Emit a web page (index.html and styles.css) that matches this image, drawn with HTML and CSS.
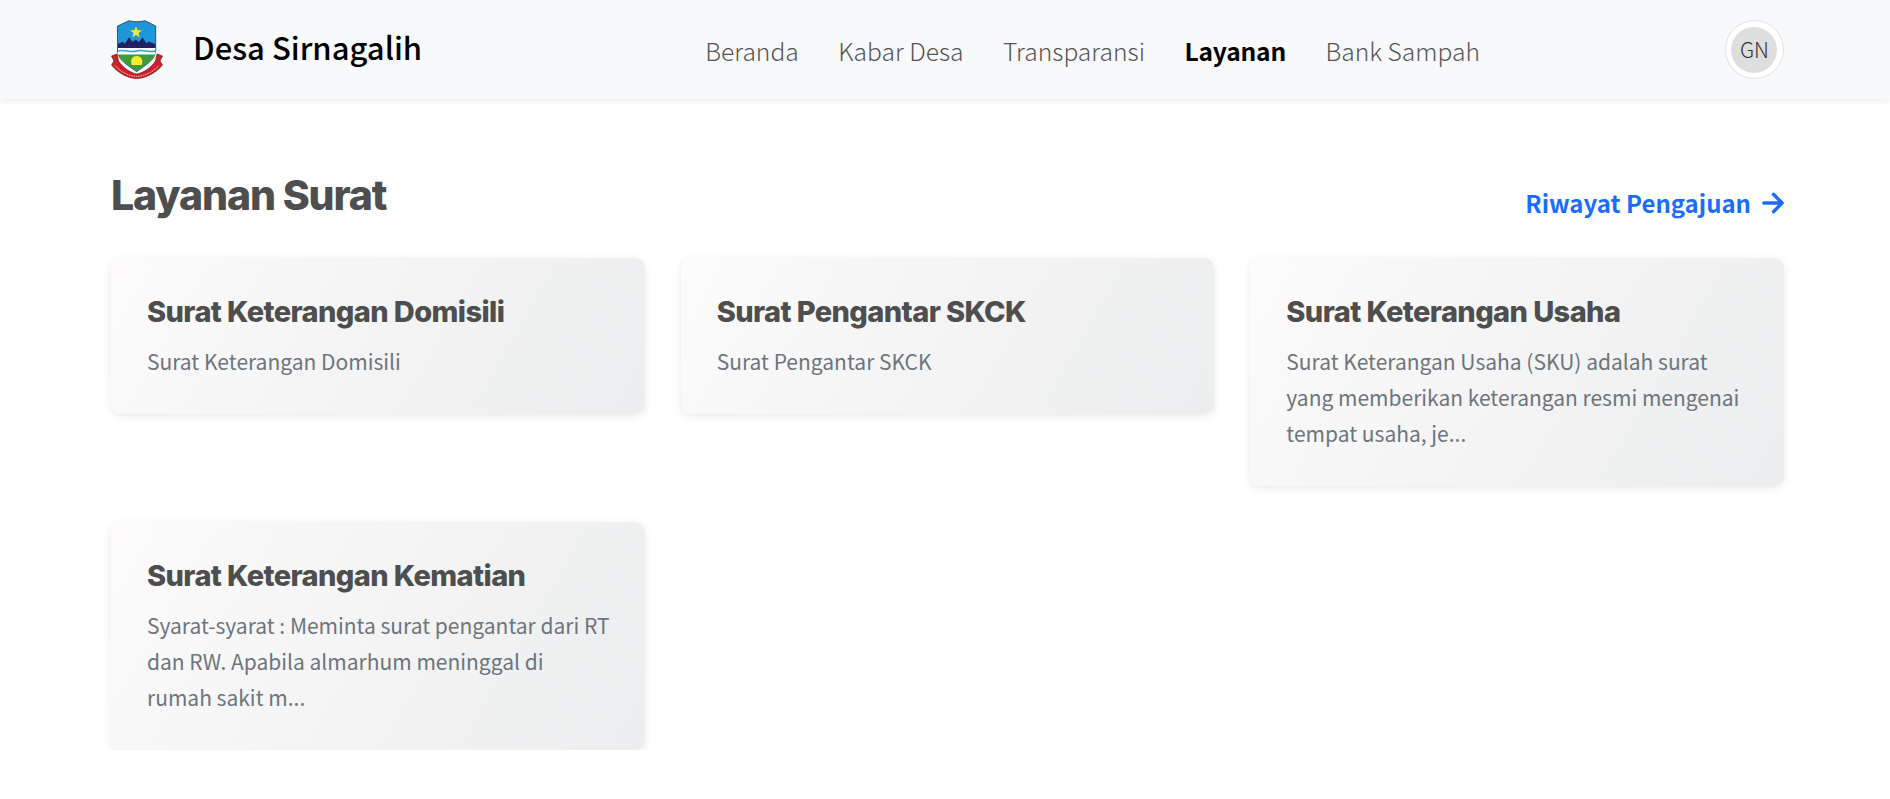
FILE: index.html
```html
<!DOCTYPE html>
<html lang="id">
<head>
  <meta charset="UTF-8">
  <meta name="viewport" content="width=device-width, initial-scale=1.0">
  <title>Desa Sirnagalih</title>
  <link rel="stylesheet" href="styles.css">
</head>
<body>
  <header class="navbar">
    <a class="brand" href="#">
      <svg class="brand-logo" viewBox="0 0 52 59" aria-hidden="true">
        <!-- pita -->
        <path d="M0.5 36 L6 34 L7.5 41 C12 48 20 53 25.7 54 C32 53 40 48 44.5 41 L46 34 L51.5 36 L49 41 L51.5 45 C44 54 33 58.5 25.7 58.5 C18 58.5 8 54 0.5 45 L3 41 Z" fill="#cf2027" stroke="#4a1013" stroke-width="0.6"/>
        <path d="M4 45.5 C10 52 18 56.4 25.7 56.4 C33 56.4 42 52 48 45.5" fill="none" stroke="#f3d9d9" stroke-width="0.9" stroke-dasharray="1.6 0.8"/>
        <!-- perisai -->
        <path d="M6.5 6 L18 0.7 C23 2 29 2 34 0.7 L44.7 6 L44.7 30 C44.7 40 33 46 25.7 51.7 C18 46 6.5 40 6.5 30 Z" fill="#1e96d8" stroke="#20242a" stroke-width="0.7"/>
        <path d="M7 28.5 L7 24 L11.3 21.7 L14 23.5 L18 17.3 L21.5 22 L24.7 19.5 L28 22 L31.7 17.3 L35 23 L38.3 21.7 L44.3 24 L44.3 28.5 Z" fill="#231f63"/>
        <path d="M7 28 H44.3 V35 H7 Z" fill="#fff"/>
        <path d="M7 31 C13 29 19 33 25.7 31 C32 29 38 33 44.3 31" fill="none" stroke="#2aa3dc" stroke-width="1.5"/>
        <path d="M7 34.5 H44.3 C44 40 33 45.5 25.7 51.2 C18 45.5 7.2 40 7 34.5 Z" fill="#3f9a3a"/>
        <path d="M20.7 45 C19 40 21 36 25.7 36 C30.4 36 32.4 40 30.7 45 Z" fill="#f7ec2f"/>
        <path d="M25 6 L26.5 10.3 L31 10.3 L27.4 13 L28.7 17.4 L25 14.8 L21.3 17.4 L22.6 13 L19 10.3 L23.5 10.3 Z" fill="#f7e93a"/>
      </svg>
      <span class="brand-name">Desa Sirnagalih</span>
    </a>
    <nav class="nav-links">
      <a href="#">Beranda</a>
      <a href="#">Kabar Desa</a>
      <a href="#">Transparansi</a>
      <a href="#" class="active">Layanan</a>
      <a href="#">Bank Sampah</a>
    </nav>
    <div class="avatar"><span>GN</span></div>
  </header>

  <main class="content">
    <div class="page-head">
      <h1>Layanan Surat</h1>
      <a class="history-link" href="#">Riwayat Pengajuan
        <svg viewBox="0 0 24 24" aria-hidden="true"><path d="M2 12 H22 M12.5 2.5 L22 12 L12.5 21.5" fill="none" stroke="currentColor" stroke-width="3.6" stroke-linecap="round" stroke-linejoin="round"/></svg>
      </a>
    </div>

    <section class="card-grid">
      <a class="card" href="#">
        <h2>Surat Keterangan Domisili</h2>
        <p>Surat Keterangan Domisili</p>
      </a>
      <a class="card" href="#">
        <h2>Surat Pengantar SKCK</h2>
        <p>Surat Pengantar SKCK</p>
      </a>
      <a class="card" href="#">
        <h2>Surat Keterangan Usaha</h2>
        <p>Surat Keterangan Usaha (SKU) adalah surat yang memberikan keterangan resmi mengenai tempat usaha, je...</p>
      </a>
      <a class="card" href="#">
        <h2>Surat Keterangan Kematian</h2>
        <p>Syarat-syarat : Meminta surat pengantar dari RT dan RW. Apabila almarhum meninggal di rumah sakit m...</p>
      </a>
    </section>
  </main>
</body>
</html>
```

FILE: styles.css
```css
* {
  margin: 0;
  padding: 0;
  box-sizing: border-box;
}

body {
  font-family: "Noto Sans CJK SC", "Noto Sans", sans-serif;
  background-color: #fff;
  color: #333;
}

a {
  text-decoration: none;
}

.navbar {
  display: flex;
  align-items: center;
  justify-content: space-between;
  height: 99px;
  padding: 0 106px 0 111px;
  background-color: #f8f9fa;
  box-shadow: 0 2px 6px rgba(0, 0, 0, 0.08);
}

.brand {
  display: flex;
  align-items: center;
  gap: 30px;
}

.brand-logo {
  width: 52px;
  height: 59px;
}

.brand-name {
  padding-bottom: 6px;
  font-size: 31px;
  font-weight: 500;
  line-height: 1.2;
  color: #000;
}

.nav-links {
  display: flex;
  gap: 39.5px;
  margin-left: 38px;
  padding-top: 1px;
}

.nav-links a {
  font-size: 24.6px;
  font-weight: 300;
  line-height: 1.5;
  color: #555;
}

.nav-links a.active {
  font-weight: 700;
  letter-spacing: -0.2px;
  color: #000;
}

.avatar {
  display: flex;
  align-items: center;
  justify-content: center;
  width: 59px;
  height: 59px;
  border: 1px solid #dee2e6;
  border-radius: 50%;
  background-color: #fff;
}

.avatar span {
  display: flex;
  align-items: center;
  justify-content: center;
  width: 46px;
  height: 46px;
  padding-bottom: 2px;
  border-radius: 50%;
  background-color: #dedede;
  font-size: 21px;
  font-weight: 300;
  color: #333;
}

.content {
  padding: 66px 106px 0 111px;
}

.page-head {
  display: flex;
  align-items: flex-end;
  justify-content: space-between;
  margin-bottom: 33px;
}

.page-head h1 {
  font-family: Inter, sans-serif;
  font-size: 41px;
  font-weight: 760;
  letter-spacing: -1.13px;
  line-height: 60px;
  color: #4e4e4e;
}

.history-link {
  display: flex;
  align-items: center;
  gap: 11px;
  font-size: 24px;
  font-weight: 700;
  line-height: 44px;
  color: #1a6dff;
}

.history-link svg {
  width: 22px;
  height: 22px;
}

.card-grid {
  display: grid;
  grid-template-columns: repeat(3, 1fr);
  gap: 36px;
  align-items: start;
}

.card {
  display: block;
  padding: 36px 34px 35px 36px;
  border-radius: 10px;
  background: linear-gradient(120deg, #fdfbfb, #ebedee);
  box-shadow: 0 2px 8px rgba(0, 0, 0, 0.09);
}

.card h2 {
  font-family: Inter, sans-serif;
  font-size: 29px;
  font-weight: 760;
  letter-spacing: -0.6px;
  line-height: 36px;
  color: #4e4e4e;
  margin-bottom: 13px;
}

.card p {
  font-size: 21px;
  font-weight: 400;
  line-height: 36px;
  color: #6c757d;
}
```
